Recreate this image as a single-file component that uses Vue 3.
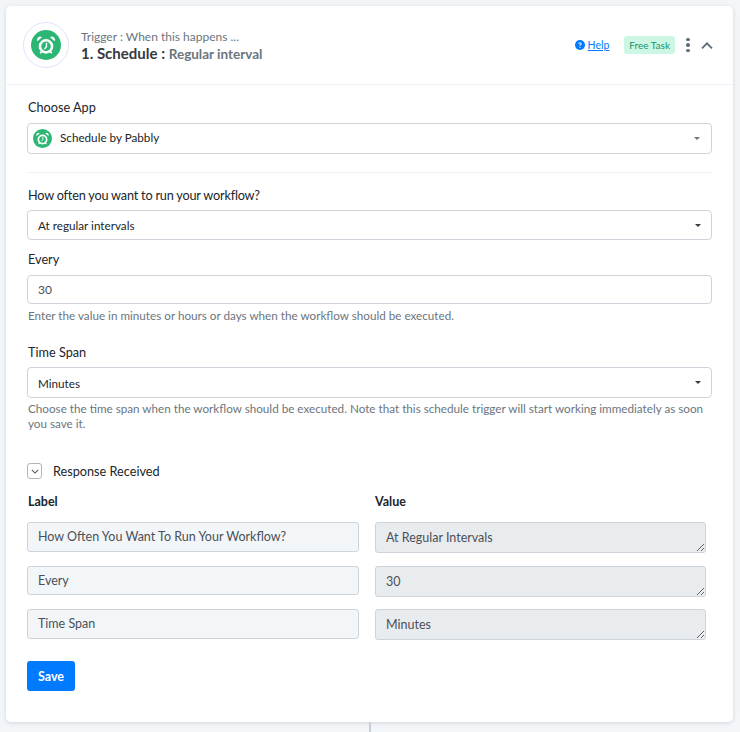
<template>
  <div class="page">
    <section class="card">
      <header class="head">
        <div class="head__ring">
          <span class="app-icon app-icon--big">
            <svg viewBox="0 0 24 24" width="22" height="22"><use href="#alarm" /></svg>
          </span>
        </div>
        <div class="head__titles">
          <p class="head__eyebrow">Trigger : When this happens ...</p>
          <h1 class="head__title">1. Schedule : <span>Regular interval</span></h1>
        </div>
        <a class="help">
          <svg viewBox="0 0 16 16" width="10" height="10">
            <circle cx="8" cy="8" r="8" fill="#007bff" />
            <path d="M5.4 6.2C5.5 4.7 6.6 4 8 4c1.500 0 2.600.8 2.600 2.100 0 1.900-2 1.800-2 3.300H7.300c0-2.200 1.900-2.200 1.900-3.300 0-.6-.5-1-1.200-1-.7 0-1.200.4-1.300 1.100z" fill="#fff" />
            <circle cx="8" cy="11.600" r="1" fill="#fff" />
          </svg>
          <span>Help</span>
        </a>
        <span class="badge">Free Task</span>
        <span class="dots"><i /><i /><i /></span>
        <svg class="chevron" viewBox="0 0 12 7" width="12" height="7">
          <path d="M1 6.300l5-5 5 5" fill="none" stroke="#5f6b7a" stroke-width="1.800" />
        </svg>
      </header>

      <div class="body">
        <label class="label label--first">Choose App</label>
        <div class="select select--app">
          <span class="app-icon">
            <svg viewBox="0 0 24 24" width="15" height="15"><use href="#alarm" /></svg>
          </span>
          <span class="select__text select__text--app">Schedule by Pabbly</span>
          <i class="caret caret--grey" />
        </div>
        <hr class="divider" />

        <label class="label label--long">How often you want to run your workflow?</label>
        <div class="select"><span class="select__text">At regular intervals</span><i class="caret" /></div>

        <label class="label label--every">Every</label>
        <div class="input">30</div>
        <p class="hint">Enter the value in minutes or hours or days when the workflow should be executed.</p>

        <label class="label label--span">Time Span</label>
        <div class="select select--span"><span class="select__text">Minutes</span><i class="caret" /></div>
        <p class="hint hint--tight">Choose the time span when the workflow should be executed. Note that this schedule trigger will start working immediately as soon you save it.</p>

        <div class="response">
          <span class="response__toggle">
            <svg viewBox="0 0 10 6" width="8" height="5"><path d="M1 1l4 4 4-4" fill="none" stroke="#4a5560" stroke-width="1.300" /></svg>
          </span>
          <span>Response Received</span>
        </div>

        <div class="table">
          <b class="table__head">Label</b>
          <b class="table__head table__head--value">Value</b>
          <template v-for="row in rows" :key="row.label">
            <div class="cell-label" :class="row.cls">{{ row.label }}</div>
            <textarea class="cell-value" :class="row.cls" rows="1" readonly>{{ row.value }}</textarea>
          </template>
        </div>

        <button class="save">Save</button>
      </div>
    </section>
    <div class="connector" />

    <svg width="0" height="0" class="defs">
      <symbol id="alarm" viewBox="0 0 24 24">
        <circle cx="12" cy="13.500" r="6.600" fill="none" stroke="#fff" stroke-width="2.800" />
        <path d="M12.500 9.500v4.500l-2.200 2.300" fill="none" stroke="#fff" stroke-width="1.500" />
        <path d="M2.600 8A3.400 3.400 0 0 1 7.600 3.600zM21.400 8A3.400 3.400 0 0 0 16.400 3.600z" fill="#fff" />
        <path d="M7.500 19l-1.800 2M16.500 19l1.800 2" stroke="#fff" stroke-width="1.800" />
      </symbol>
    </svg>
  </div>
</template>

<script setup>
const rows = [
  { label: 'How Often You Want To Run Your Workflow?', value: 'At Regular Intervals', cls: 'row-1' },
  { label: 'Every', value: '30', cls: 'row-2' },
  { label: 'Time Span', value: 'Minutes', cls: 'row-3' },
]
</script>

<style>
html, body { margin: 0; background: #f3f6f9; }
</style>

<style scoped>
.page {
  position: relative;
  width: 740px;
  height: 732px;
  overflow: hidden;
  padding: 6px 7px 0 6px;
  box-sizing: border-box;
  background: #f3f6f9;
  font-family: Lato, 'Open Sans', sans-serif;
  color: #212529;
}

.card {
  height: 716px;
  background: #fff;
  border-radius: 5px;
  box-shadow: 0 1px 4px rgba(60, 75, 95, 0.18);
  box-sizing: border-box;
}

.head {
  display: flex;
  align-items: center;
  height: 79px;
  padding: 0 20px 0 17px;
  border-bottom: 1px solid #edf2fb;
  box-sizing: border-box;
}
.head__ring {
  width: 46px;
  height: 46px;
  border: 1px solid #dbe4fa;
  border-radius: 50%;
  display: flex;
  align-items: center;
  justify-content: center;
  box-sizing: border-box;
  margin-right: 12px;
}
.app-icon {
  width: 19px;
  height: 19px;
  border-radius: 50%;
  background: #2bb673;
  display: flex;
  align-items: center;
  justify-content: center;
  flex-shrink: 0;
}
.app-icon--big { width: 30px; height: 30px; }
.head__titles { flex: 1; padding-top: 2px; }
.head__eyebrow {
  margin: 0;
  font-size: 12px;
  line-height: 14px;
  color: #6c757d;
}
.head__title {
  margin: 0;
  font-size: 15px;
  line-height: 18px;
  font-weight: 700;
  color: #343a40;
}
.head__title span { color: #6c757d; font-size: 13.500px; }

.help {
  display: flex;
  align-items: center;
  gap: 3px;
  font-size: 10.500px;
  color: #007bff;
  margin-right: 15px;
}
.help span { text-decoration: underline; }
.badge {
  background: #cdf7e4;
  color: #16936a;
  font-size: 10px;
  line-height: 18px;
  padding: 0 5px;
  border-radius: 3px;
  margin-right: 11px;
}
.dots {
  display: flex;
  flex-direction: column;
  gap: 2px;
  margin-right: 11px;
}
.dots i {
  width: 4px;
  height: 3.500px;
  background: #5f6b7a;
  border-radius: 50%;
}

.body { padding: 0 21px; }

.label {
  display: block;
  padding-left: 1px;
  font-size: 12.700px;
  line-height: 16px;
  margin: 14px 0 7px;
}
.label--long { letter-spacing: -0.2px; }
.label--every { margin: 11px 0 8px; }
.label--span { margin: 21px 0 7px; }
.label--first { margin: 14px 0 8px; }

.select, .input {
  display: flex;
  align-items: center;
  height: 30px;
  padding: 0 10px;
  border: 1px solid #ced4da;
  border-radius: 4px;
  box-sizing: border-box;
  font-size: 11.700px;
}
.select__text { flex: 1; }
.select__text--app { margin: 0 0 3px 8px; }
.select--app { height: 31px; padding-left: 5px; }
.select--span { height: 31px; }
.input { height: 29px; font-size: 12px; color: #495057; }

.caret {
  width: 0;
  height: 0;
  border: 3.500px solid transparent;
  border-top-color: #343a40;
  border-bottom: 0;
}
.caret--grey { border-top-color: #6c757d; margin-right: 1px; }

.divider {
  border: 0;
  border-top: 1px solid #edf2fb;
  margin: 18px 0 0;
}

.hint {
  margin: 4px 0 0;
  padding-left: 1px;
  font-size: 11.700px;
  line-height: 15px;
  color: #6c757d;
}
.hint--tight { margin-top: 3px; }

.response {
  display: flex;
  align-items: center;
  gap: 11px;
  margin-top: 32px;
  font-size: 12.700px;
  line-height: 16px;
}
.response__toggle {
  width: 13px;
  height: 14px;
  border: 1px solid #adb5bd;
  border-radius: 3px;
  display: flex;
  align-items: center;
  justify-content: center;
}

.table {
  display: grid;
  grid-template-columns: 332px 331px;
  column-gap: 16px;
  margin-top: 15px;
}
.table__head {
  padding-left: 1px;
  font-size: 12.500px;
  line-height: 16px;
  margin-bottom: 12px;
}
.table__head--value { padding-left: 0; }
.cell-label, .cell-value {
  font-family: inherit;
  font-size: 12.500px;
  color: #495057;
  border: 1px solid #ced4da;
  border-radius: 3px;
  box-sizing: border-box;
  padding: 0 10px;
  display: block;
  width: 100%;
  margin: 0;
}
.cell-label {
  height: 30px;
  line-height: 28px;
  background: #f3f6f9;
}
.cell-value {
  height: 31px;
  padding-top: 6px;
  line-height: 18px;
  background: #e9ecef;
  outline: none;
  resize: vertical;
}
.cell-label.row-1, .cell-value.row-1 { margin-bottom: 13px; }
.cell-label.row-2 { height: 29px; margin-bottom: 14px; }
.cell-value.row-2 { margin-bottom: 12px; }

.save {
  display: block;
  width: 48px;
  height: 30px;
  margin-top: 21px;
  border: 0;
  border-radius: 3px;
  background: #007bff;
  color: #fff;
  font-family: inherit;
  font-size: 12.500px;
  font-weight: 700;
  padding: 0;
}

.connector {
  position: absolute;
  left: 369px;
  top: 722px;
  width: 2px;
  height: 10px;
  background: #c9ced4;
}
.defs { position: absolute; }
</style>
